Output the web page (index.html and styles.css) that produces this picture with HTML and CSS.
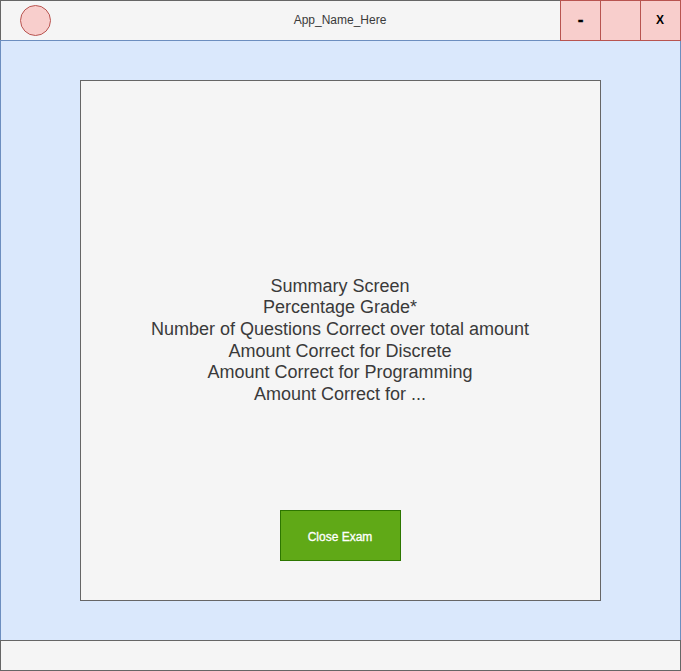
FILE: index.html
```html
<!DOCTYPE html>
<html lang="en">
<head>
<meta charset="utf-8">
<title>App_Name_Here</title>
<link rel="stylesheet" href="styles.css">
</head>
<body>
<div class="window">
  <header class="titlebar">
    <svg class="logo" width="32" height="32" viewBox="0 0 32 32"><circle cx="15.5" cy="15.5" r="15" fill="#f8cecc" stroke="#b85450"/></svg>
    <h1 class="title">App_Name_Here</h1>
    <div class="controls">
      <button class="control minimize">-</button>
      <button class="control"></button>
      <button class="control">X</button>
    </div>
  </header>
  <main class="content">
    <section class="panel">
      <div class="summary">
        <p>Summary Screen</p>
        <p>Percentage Grade*</p>
        <p>Number of Questions Correct over total amount</p>
        <p>Amount Correct for Discrete</p>
        <p>Amount Correct for Programming</p>
        <p>Amount Correct for ...</p>
      </div>
      <button class="close">Close Exam</button>
    </section>
  </main>
  <footer class="statusbar"></footer>
</div>
</body>
</html>
```
FILE: styles.css
```css
* {
  box-sizing: border-box;
}

body {
  margin: 0;
  font-family: "Liberation Sans", Arial, sans-serif;
  font-size: 12px;
  color: #3a3a3a;
}

.window {
  width: 681px;
  height: 671px;
  display: grid;
  grid-template-rows: 40px 600px 31px;
}

.titlebar {
  display: grid;
  grid-template-columns: 259px 160px 140px 121px;
  align-items: start;
  height: 40px;
  background: #f5f5f5;
  border-top: 1px solid #666;
  border-left: 1px solid #666;
}

.logo {
  margin: 4px 0 0 19px;
}

.title {
  margin: 0;
  font-size: 12px;
  font-weight: normal;
  line-height: 38px;
  text-align: center;
}

.controls {
  grid-column: 4;
  display: flex;
  height: 41px;
  margin-top: -1px;
  position: relative;
}

.control {
  width: 41px;
  height: 41px;
  margin: 0;
  padding: 0 1px 2px 0;
  border: 1px solid #b85450;
  background: #f8cecc;
  color: #000;
  font: bold 12px "Liberation Sans", Arial, sans-serif;
}

.control + .control {
  margin-left: -1px;
}

.minimize {
  padding-right: 0;
  font-size: 17px;
  -webkit-text-stroke: 0.4px #000;
}

.content {
  padding: 39px 79px;
  background: #dae8fc;
  border: 1px solid #6c8ebf;
  border-bottom: 0;
}

.panel {
  width: 521px;
  height: 521px;
  display: flex;
  flex-direction: column;
  align-items: center;
  background: #f5f5f5;
  border: 1px solid #666;
}

.summary {
  margin-top: 194.8px;
  padding-right: 1px;
  font-size: 18px;
  line-height: 21.6px;
  text-align: center;
}

.summary p {
  margin: 0;
}

.close {
  width: 121px;
  height: 51px;
  margin-top: 104.6px;
  padding: 3px 1px 0 0;
  background: #60a917;
  border: 1px solid #2d7600;
  color: #fff;
  font: 12px "Liberation Sans", Arial, sans-serif;
  -webkit-text-stroke: 0.3px #fff;
}

.statusbar {
  background: #f5f5f5;
  border: 1px solid #666;
}
```
